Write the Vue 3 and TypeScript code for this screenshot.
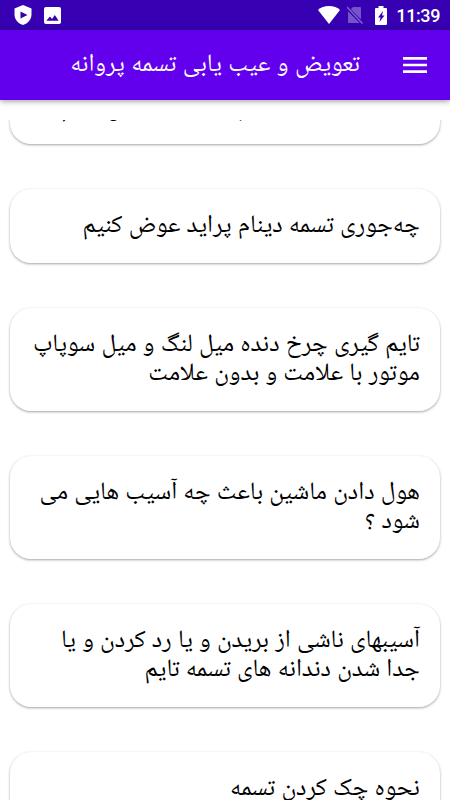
<script setup lang="ts">
const cards: string[][] = [
  ['چه‌جوری تسمه دینام سانتافه عوض کنیم'],
  ['چه‌جوری تسمه دینام پراید عوض کنیم'],
  ['تایم گیری چرخ دنده میل لنگ و میل سوپاپ', 'موتور با علامت و بدون علامت'],
  ['هول دادن ماشین باعث چه آسیب هایی می', 'شود ؟'],
  ['آسیبهای ناشی از بریدن و یا رد کردن و یا', 'جدا شدن دندانه های تسمه تایم'],
  ['نحوه چک کردن تسمه'],
]
</script>

<template>
  <div class="screen">
    <header class="status">
      <svg class="shield" viewBox="0 0 18 20"><path fill="#fff" fill-rule="evenodd" d="M9 0 .5 3.500v6C.5 14.500 4 18.500 9 20c5-1.500 8.500-5.500 8.500-10.500v-6zM6.500 6.500v7l7-3.500z" /></svg>
      <svg class="image" viewBox="0 0 18 18"><path fill="#fff" fill-rule="evenodd" d="M2 0h14q2 0 2 2v14q0 2-2 2H2q-2 0-2-2V2q0-2 2-2zM2.500 14.500h13L11.500 8.500l-3 4.200-2.200-2.600z" /></svg>
      <span class="grow"></span>
      <svg class="wifi" viewBox="0 0 22 18"><path fill="#fff" d="M11 18 0 4C2.500 1.500 6.500 0 11 0s8.500 1.500 11 4z" /></svg>
      <svg class="sim" viewBox="0 0 16 18"><path fill="#fff" fill-opacity=".33" d="M6 1h7q1 0 1 1v11.500L3.800 3.200zM1 5.200 12.700 17H2q-1 0-1-1z" /><path stroke="#fff" stroke-opacity=".4" stroke-width="1.300" d="M0 1l15.500 16.500" /></svg>
      <svg class="battery" viewBox="0 0 12 19"><path fill="#fff" fill-rule="evenodd" d="M3.500 0h5v2H11q1 0 1 1v15q0 1-1 1H1q-1 0-1-1V3q0-1 1-1h2.500zM8 5l-5 6.500h2.500L4.500 16 9.500 9.500H7z" /></svg>
      <span class="clock">11:39</span>
    </header>
    <div class="bar" dir="rtl">
      <svg class="menu" viewBox="0 0 24 16"><path fill="#fff" d="M0 0h24v2.700H0zM0 6.650h24v2.700H0zM0 13.300h24V16H0z" /></svg>
      <h1>تعویض و عیب یابی تسمه پروانه</h1>
    </div>
    <main class="list" dir="rtl">
      <article v-for="(card, index) in cards" :key="index" class="card">
        <p v-for="line in card" :key="line">{{ line }}</p>
      </article>
    </main>
  </div>
</template>

<style>
body { margin: 0; }
</style>
<style scoped>
.screen { height: 800px; width: 450px; display: flex; flex-direction: column; overflow: hidden; background: #fff; font-family: Roboto, "Noto Naskh Arabic UI", "Noto Naskh Arabic", "Noto Sans Arabic UI", "Noto Sans Arabic", "Droid Arabic Naskh", Vazirmatn, "DejaVu Sans", sans-serif; }
.status { height: 30px; flex: none; box-sizing: border-box; background: #3700b3; display: flex; align-items: center; padding: 0 10px 0 14px; color: #fff; }
.shield { width: 18px; height: 20px; }
.image { width: 17px; height: 17px; margin-left: 12px; }
.grow { flex: 1; }
.wifi { width: 22px; height: 18px; }
.sim { width: 16px; height: 18px; margin-left: 7px; }
.battery { width: 12px; height: 19px; margin-left: 12px; }
.clock { font: 500 18px/30px Roboto, sans-serif; letter-spacing: -.4px; margin-left: 9px; padding-top: 2px; }
.bar { height: 70px; flex: none; background: #6200ee; display: flex; align-items: center; box-sizing: border-box; padding-right: 23px; box-shadow: 0 1px 6px rgba(0,0,0,.42); color: #fff; }
.menu { width: 24px; height: 16px; }
h1 { margin: 0 43px 0 0; padding-top: 1px; font-size: 25px; font-weight: 400; line-height: 30px; word-spacing: .3px; white-space: nowrap; }
.list { flex: 1; min-height: 0; overflow: hidden; margin-top: 20px; padding: 0 10px; }
.card { box-sizing: border-box; border-radius: 21px; padding: 23.400px 20px 21.400px; margin-bottom: 44.800px; background: #fff; box-shadow: 0 1px 2.500px rgba(0,0,0,.36); color: #000; }
.card:first-child { margin-top: -49.800px; }
.card p { margin: 0; font-size: 25px; line-height: 29.200px; white-space: nowrap; }
</style>
